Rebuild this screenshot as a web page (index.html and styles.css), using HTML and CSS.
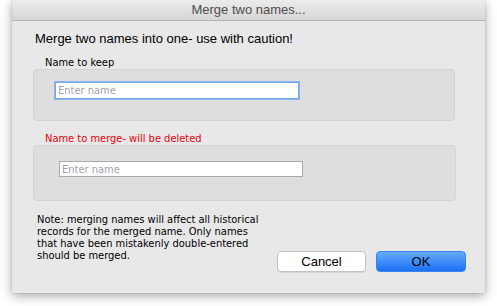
FILE: index.html
```html
<!DOCTYPE html>
<html>
<head>
<meta charset="utf-8">
<link rel="stylesheet" href="styles.css">
</head>
<body>
<div class="window">
  <div class="titlebar">Merge two names...</div>
  <div class="content">
    <div class="heading">Merge two names into one- use with caution!</div>
    <div class="label">Name to keep</div>
    <div class="group group-keep">
      <input class="field field-focus" type="text" placeholder="Enter name">
    </div>
    <div class="label label-red">Name to merge- will be deleted</div>
    <div class="group group-merge">
      <input class="field field-plain" type="text" placeholder="Enter name">
    </div>
    <div class="footer">
      <div class="note">Note: merging names will affect all historical records for the merged name. Only names that have been mistakenly double-entered should be merged.</div>
      <div class="buttons">
        <button class="btn btn-cancel">Cancel</button>
        <button class="btn btn-ok">OK</button>
      </div>
    </div>
  </div>
</div>
</body>
</html>
```

FILE: styles.css
```css
html, body {
  margin: 0;
  padding: 0;
  background: #ffffff;
}
body {
  font-family: "DejaVu Sans", "Liberation Sans", sans-serif;
  width: 497px;
  height: 306px;
  overflow: hidden;
}
.window {
  margin-left: 12px;
  width: 473px;
  height: 293px;
  background: #e8e8e8;
  box-shadow: 0 3px 10px rgba(0, 0, 0, 0.35), 0 0 1px rgba(0, 0, 0, 0.3);
  display: flex;
  flex-direction: column;
}
.titlebar {
  height: 20px;
  line-height: 20px;
  border-bottom: 1px solid #b4b4b4;
  background: linear-gradient(#ececec, #d6d6d6);
  text-align: center;
  font-family: "Liberation Sans", sans-serif;
  font-size: 13px;
  color: #4d4d4d;
}
.content {
  padding: 10px 0 0 21px;
}
.heading {
  margin-left: 2px;
  font-size: 13px;
  line-height: 16px;
  color: #000;
  font-family: "Liberation Sans", sans-serif;
}
.label {
  margin-top: 9px;
  margin-left: 12px;
  font-size: 11px;
  line-height: 13px;
  color: #000;
  font-family: "DejaVu Sans Condensed", "DejaVu Sans", sans-serif;
  font-stretch: condensed;
}
.label-red {
  color: #e8000b;
  margin-top: 11px;
}
.group {
  box-sizing: border-box;
  background: #dedede;
  border: 1px solid #d4d4d4;
  border-radius: 4px;
}
.group-keep {
  width: 422px;
  height: 52px;
  padding: 12px 0 0 21px;
}
.group-merge {
  width: 423px;
  height: 56px;
  padding: 15px 0 0 25px;
}
.field {
  display: block;
  box-sizing: border-box;
  margin: 0;
  padding: 0 2px;
  background: #fff;
  font-family: "DejaVu Sans Condensed", "DejaVu Sans", sans-serif;
  font-stretch: condensed;
  font-size: 11px;
  color: #000;
  outline: none;
}
.field::placeholder {
  color: #a49fb0;
}
.field-focus {
  width: 244px;
  height: 17px;
  border: 1px solid #7aa7e8;
  box-shadow: 0 0 0 1px #8bb5f0;
}
.field-plain {
  width: 244px;
  height: 16px;
  border: 1px solid #aaaaaa;
}
.footer {
  display: flex;
  justify-content: space-between;
  align-items: flex-start;
}
.note {
  margin-top: 13px;
  margin-left: 4px;
  width: 224px;
  font-size: 11px;
  line-height: 12px;
  color: #000;
  font-family: "DejaVu Sans Condensed", "DejaVu Sans", sans-serif;
  font-stretch: condensed;
}
.buttons {
  display: flex;
  gap: 10px;
  margin-top: 50px;
  margin-right: 19px;
}
.btn {
  box-sizing: border-box;
  width: 90px;
  height: 21px;
  margin: 0;
  padding: 0;
  font-family: "Liberation Sans", sans-serif;
  font-size: 13px;
  color: #000;
  border-radius: 4px;
}
.btn-cancel {
  width: 89px;
  background: #fff;
  border: 1px solid #c2c2c2;
  box-shadow: 0 1px 0 rgba(0, 0, 0, 0.08);
}
.btn-ok {
  background: linear-gradient(#66abfc, #1b70f4);
  border: 1px solid #3b84f0;
}
```
